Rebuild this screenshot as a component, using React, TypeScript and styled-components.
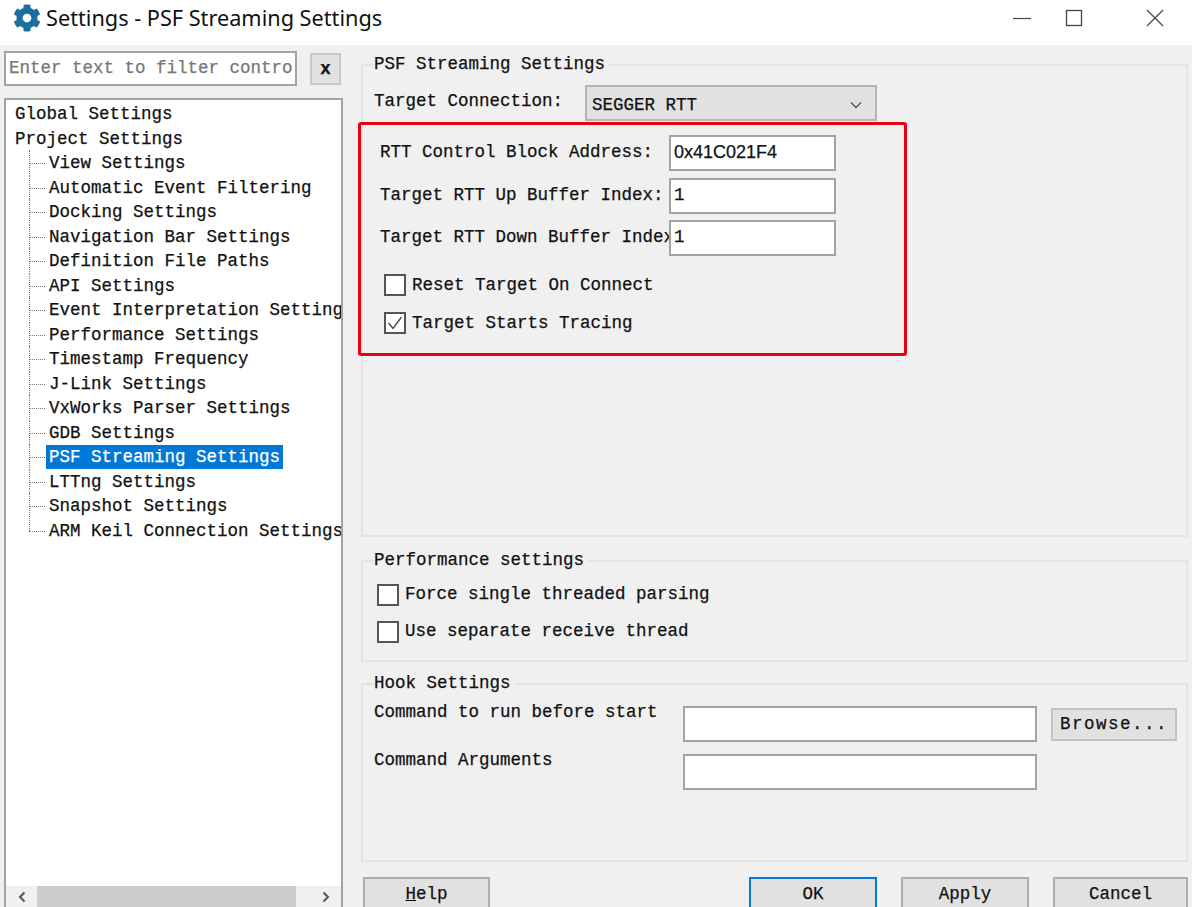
import React from 'react';
import styled, { createGlobalStyle } from 'styled-components';
import { FaCog } from 'react-icons/fa';

const GlobalStyle = createGlobalStyle`
  html, body {
    margin: 0;
    padding: 0;
    background: #f0f0f0;
  }
  * {
    box-sizing: border-box;
  }
`;

const MONO = `"Liberation Mono", "DejaVu Sans Mono", monospace`;

const Window = styled.div`
  display: flex;
  flex-direction: column;
  width: 1192px;
  height: 907px;
  overflow: hidden;
  background: #f0f0f0;
  color: #111;
  font-family: ${MONO};
  font-size: 17.5px;
  -webkit-text-stroke: 0.25px currentColor;
`;

const TitleBar = styled.div`
  display: flex;
  align-items: center;
  flex: 0 0 45px;
  padding: 0 27px 10px 13px;
  background: #fff;
  -webkit-text-stroke: 0;
`;

const AppIcon = styled(FaCog)`
  width: 28px;
  height: 28px;
  color: #1d6d9f;
`;

const TitleText = styled.div`
  margin-left: 5px;
  flex: 1;
  font-family: "Noto Sans", sans-serif;
  font-size: 21.7px;
  color: #111;
`;

const WindowButton = styled.div<{ $left: number }>`
  display: flex;
  flex: 0 0 20px;
  height: 20px;
  margin-left: ${({ $left }) => $left}px;
  color: #444;
`;

const Body = styled.div`
  display: flex;
  flex: 1;
  min-height: 0;
`;

const LeftColumn = styled.div`
  display: flex;
  flex-direction: column;
  flex: 0 0 343px;
  min-width: 0;
  padding-left: 4px;
`;

const FilterRow = styled.div`
  display: flex;
  align-items: center;
  gap: 13px;
  padding-top: 6px;
  margin-bottom: 12px;
`;

const FilterInput = styled.div`
  width: 293px;
  height: 35px;
  padding-left: 3px;
  line-height: 30px;
  white-space: nowrap;
  overflow: hidden;
  background: #fff;
  border: 2px solid #a3a3a3;
  color: #777;
`;

const ClearButton = styled.div`
  display: flex;
  align-items: center;
  justify-content: center;
  width: 31px;
  height: 32px;
  background: #e1e1e1;
  border: 2px solid #c9c9c9;
  font-family: "Liberation Sans", sans-serif;
  font-size: 18px;
  font-weight: 700;
  color: #111;
`;

const Tree = styled.div`
  display: flex;
  flex-direction: column;
  flex: 1;
  min-height: 0;
  min-width: 0;
  background: #fff;
  border: solid #a3a3a3;
  border-width: 2px 2px 0;
`;

const TreeList = styled.div`
  flex: 1;
  min-height: 0;
  padding-top: 2px;
  overflow: hidden;
`;

const TreeRow = styled.div<{ $child?: boolean; $last?: boolean }>`
  position: relative;
  height: 24.53px;
  line-height: 24px;
  white-space: nowrap;
  margin-left: ${({ $child }) => ($child ? '40px' : '9px')};

  ${({ $child, $last }) =>
    $child
      ? `
    &::before {
      content: '';
      position: absolute;
      left: -17px;
      top: 12px;
      width: 16px;
      border-top: 1px dotted #777;
    }
    &::after {
      content: '';
      position: absolute;
      left: -17px;
      top: -1px;
      height: ${$last ? '13px' : '26px'};
      border-left: 1px dotted #777;
    }
  `
      : ''}
`;

const TreeLabel = styled.span<{ $selected?: boolean }>`
  display: inline-block;
  height: 24px;
  padding: 0 3px;
  background: ${({ $selected }) => ($selected ? '#0078d7' : 'transparent')};
  color: ${({ $selected }) => ($selected ? '#fff' : 'inherit')};
`;

const RootLabel = styled.span`
  display: inline-block;
`;

const ScrollBar = styled.div`
  display: flex;
  align-items: center;
  flex: 0 0 21px;
  background: #f0f0f0;
  color: #555;
`;

const ScrollArrow = styled.div`
  display: flex;
  align-items: center;
  justify-content: center;
  flex: 0 0 31px;
  height: 100%;
`;

const ScrollTrack = styled.div`
  flex: 1;
  height: 100%;
`;

const ScrollThumb = styled.div`
  width: 259px;
  height: 100%;
  background: #cdcdcd;
`;

const RightColumn = styled.div`
  display: flex;
  flex-direction: column;
  flex: 1;
  min-width: 0;
  padding: 9px 4px 0 18px;
`;

const GroupBox = styled.fieldset<{ $height: number; $top?: number }>`
  flex: 0 0 ${({ $height }) => $height}px;
  min-width: 0;
  margin: ${({ $top }) => $top || 0}px 0 0;
  padding: 0 0 0 11px;
  border: 2px solid #e3e3e3;
`;

const GroupTitle = styled.legend`
  height: 22px;
  line-height: 20px;
  padding: 0 4px 0 0;
`;

const ConnectionRow = styled.div`
  display: flex;
  padding-top: 9px;
`;

const ConnectionLabel = styled.div`
  flex: 0 0 211px;
  line-height: 20px;
  margin-top: 6px;
`;

const ComboBox = styled.div`
  display: flex;
  align-items: center;
  justify-content: space-between;
  width: 292px;
  height: 36px;
  padding: 3px 12px 0 5px;
  background: #e1e1e1;
  border: 2px solid #b4b4b4;
  color: #555;
`;

const ComboText = styled.span`
  color: #111;
`;

const Highlight = styled.div`
  display: flex;
  flex-direction: column;
  width: 549px;
  height: 234px;
  margin: 1px 0 0 -16px;
  padding: 10px 0 0 19px;
  border: 3px solid #e60012;
  border-radius: 3px;
`;

const FieldRow = styled.div<{ $gap?: number }>`
  display: flex;
  height: 36px;
  margin-bottom: ${({ $gap }) => $gap ?? 7}px;
`;

const FieldLabel = styled.div`
  flex: 0 0 289px;
  overflow: hidden;
  white-space: nowrap;
  line-height: 34px;
`;

const Field = styled.div<{ $width: number; $sans?: boolean }>`
  flex: 0 0 ${({ $width }) => $width}px;
  height: 36px;
  padding-left: 3px;
  line-height: 31px;
  background: #fff;
  border: 2px solid #a3a3a3;
  font-family: ${({ $sans }) => ($sans ? '"Liberation Sans", sans-serif' : 'inherit')};
  font-size: ${({ $sans }) => ($sans ? '18px' : 'inherit')};
`;

const CheckRow = styled.div<{ $top: number; $left?: number; $textHeight?: number }>`
  display: flex;
  align-items: flex-start;
  gap: 6px;
  margin: ${({ $top }) => $top}px 0 0 ${({ $left }) => $left ?? 0}px;
  height: 22px;
  line-height: ${({ $textHeight }) => $textHeight ?? 20}px;
`;

const CheckBox = styled.div`
  display: flex;
  align-items: center;
  justify-content: center;
  flex: 0 0 22px;
  height: 22px;
  background: #fff;
  border: 2px solid #555;
  color: #444;
`;

const CommandRow = styled.div<{ $top: number }>`
  display: flex;
  align-items: flex-start;
  margin-top: ${({ $top }) => $top}px;
`;

const CommandLabel = styled.div`
  flex: 0 0 309px;
  line-height: 13px;
`;

const SmallButton = styled.div`
  flex: 0 0 126px;
  height: 33px;
  margin: 2px 0 0 14px;
  text-align: center;
  line-height: 29px;
  background: #e1e1e1;
  border: 2px solid #c2c2c2;
  letter-spacing: 1.5px;
`;

const ButtonBar = styled.div`
  display: flex;
  margin-top: 15px;
  padding-left: 2px;
`;

const DialogButton = styled.div<{ $width: number; $left: number; $primary?: boolean }>`
  flex: 0 0 ${({ $width }) => $width}px;
  height: 40px;
  margin-left: ${({ $left }) => $left}px;
  text-align: center;
  line-height: 30px;
  background: #e1e1e1;
  border: 2px solid ${({ $primary }) => ($primary ? '#0078d7' : '#adadad')};
`;

const Underlined = styled.span`
  text-decoration: underline;
`;

const children = [
  'View Settings',
  'Automatic Event Filtering',
  'Docking Settings',
  'Navigation Bar Settings',
  'Definition File Paths',
  'API Settings',
  'Event Interpretation Settings',
  'Performance Settings',
  'Timestamp Frequency',
  'J-Link Settings',
  'VxWorks Parser Settings',
  'GDB Settings',
  'PSF Streaming Settings',
  'LTTng Settings',
  'Snapshot Settings',
  'ARM Keil Connection Settings',
];

const App = () => (
  <Window>
    <GlobalStyle />
    <TitleBar>
      <AppIcon />
      <TitleText>Settings - PSF Streaming Settings</TitleText>
      <WindowButton $left={0}>
        <svg width="20" height="20" viewBox="0 0 20 20">
          <path d="M1 10.5h18" stroke="currentColor" strokeWidth="1.2" />
        </svg>
      </WindowButton>
      <WindowButton $left={32}>
        <svg width="20" height="20" viewBox="0 0 20 20">
          <rect x="2.5" y="2.5" width="15" height="15" fill="none" stroke="currentColor" strokeWidth="1.3" />
        </svg>
      </WindowButton>
      <WindowButton $left={61}>
        <svg width="20" height="20" viewBox="0 0 20 20">
          <path d="M2 2l16 16M18 2L2 18" stroke="currentColor" strokeWidth="1.2" />
        </svg>
      </WindowButton>
    </TitleBar>
    <Body>
      <LeftColumn>
        <FilterRow>
          <FilterInput>Enter text to filter contro</FilterInput>
          <ClearButton>x</ClearButton>
        </FilterRow>
        <Tree>
          <TreeList>
            <TreeRow>
              <RootLabel>Global Settings</RootLabel>
            </TreeRow>
            <TreeRow>
              <RootLabel>Project Settings</RootLabel>
            </TreeRow>
            {children.map((name, i) => (
              <TreeRow key={name} $child $last={i === children.length - 1}>
                <TreeLabel $selected={name === 'PSF Streaming Settings'}>{name}</TreeLabel>
              </TreeRow>
            ))}
          </TreeList>
          <ScrollBar>
            <ScrollArrow>
              <svg width="12" height="14" viewBox="0 0 12 14">
                <path d="M8.5 2.5L4 7l4.5 4.5" fill="none" stroke="currentColor" strokeWidth="2" />
              </svg>
            </ScrollArrow>
            <ScrollTrack>
              <ScrollThumb />
            </ScrollTrack>
            <ScrollArrow>
              <svg width="12" height="14" viewBox="0 0 12 14">
                <path d="M3.5 2.5L8 7l-4.5 4.5" fill="none" stroke="currentColor" strokeWidth="2" />
              </svg>
            </ScrollArrow>
          </ScrollBar>
        </Tree>
      </LeftColumn>
      <RightColumn>
        <GroupBox $height={483}>
          <GroupTitle>PSF Streaming Settings</GroupTitle>
          <ConnectionRow>
            <ConnectionLabel>Target Connection:</ConnectionLabel>
            <ComboBox>
              <ComboText>SEGGER RTT</ComboText>
              <svg width="14" height="14" viewBox="0 0 14 14">
                <path d="M2 4.5l5 5 5-5" fill="none" stroke="currentColor" strokeWidth="1.4" />
              </svg>
            </ComboBox>
          </ConnectionRow>
          <Highlight>
            <FieldRow>
              <FieldLabel>RTT Control Block Address:</FieldLabel>
              <Field $width={167} $sans>0x41C021F4</Field>
            </FieldRow>
            <FieldRow $gap={6}>
              <FieldLabel>Target RTT Up Buffer Index:</FieldLabel>
              <Field $width={167}>1</Field>
            </FieldRow>
            <FieldRow $gap={0}>
              <FieldLabel>Target RTT Down Buffer Index:</FieldLabel>
              <Field $width={167}>1</Field>
            </FieldRow>
            <CheckRow $top={18} $left={4} $textHeight={22}>
              <CheckBox />
              Reset Target On Connect
            </CheckRow>
            <CheckRow $top={16} $left={4} $textHeight={22}>
              <CheckBox>
                <svg width="16" height="16" viewBox="0 0 16 16">
                  <path d="M1.5 8l4.5 5.5L14.5 2" fill="none" stroke="currentColor" strokeWidth="1.3" />
                </svg>
              </CheckBox>
              Target Starts Tracing
            </CheckRow>
          </Highlight>
        </GroupBox>
        <GroupBox $height={112} $top={13}>
          <GroupTitle>Performance settings</GroupTitle>
          <CheckRow $top={12} $left={3}>
            <CheckBox />
            Force single threaded parsing
          </CheckRow>
          <CheckRow $top={15} $left={3}>
            <CheckBox />
            Use separate receive thread
          </CheckRow>
        </GroupBox>
        <GroupBox $height={189} $top={11}>
          <GroupTitle>Hook Settings</GroupTitle>
          <CommandRow $top={11}>
            <CommandLabel>Command to run before start</CommandLabel>
            <Field $width={354} />
            <SmallButton>Browse...</SmallButton>
          </CommandRow>
          <CommandRow $top={12}>
            <CommandLabel>Command Arguments</CommandLabel>
            <Field $width={354} />
          </CommandRow>
        </GroupBox>
        <ButtonBar>
          <DialogButton $width={127} $left={0}>
            <Underlined>H</Underlined>elp
          </DialogButton>
          <DialogButton $width={128} $left={259} $primary>OK</DialogButton>
          <DialogButton $width={128} $left={24}>Apply</DialogButton>
          <DialogButton $width={135} $left={24}>Cancel</DialogButton>
        </ButtonBar>
      </RightColumn>
    </Body>
  </Window>
);

export default App;
